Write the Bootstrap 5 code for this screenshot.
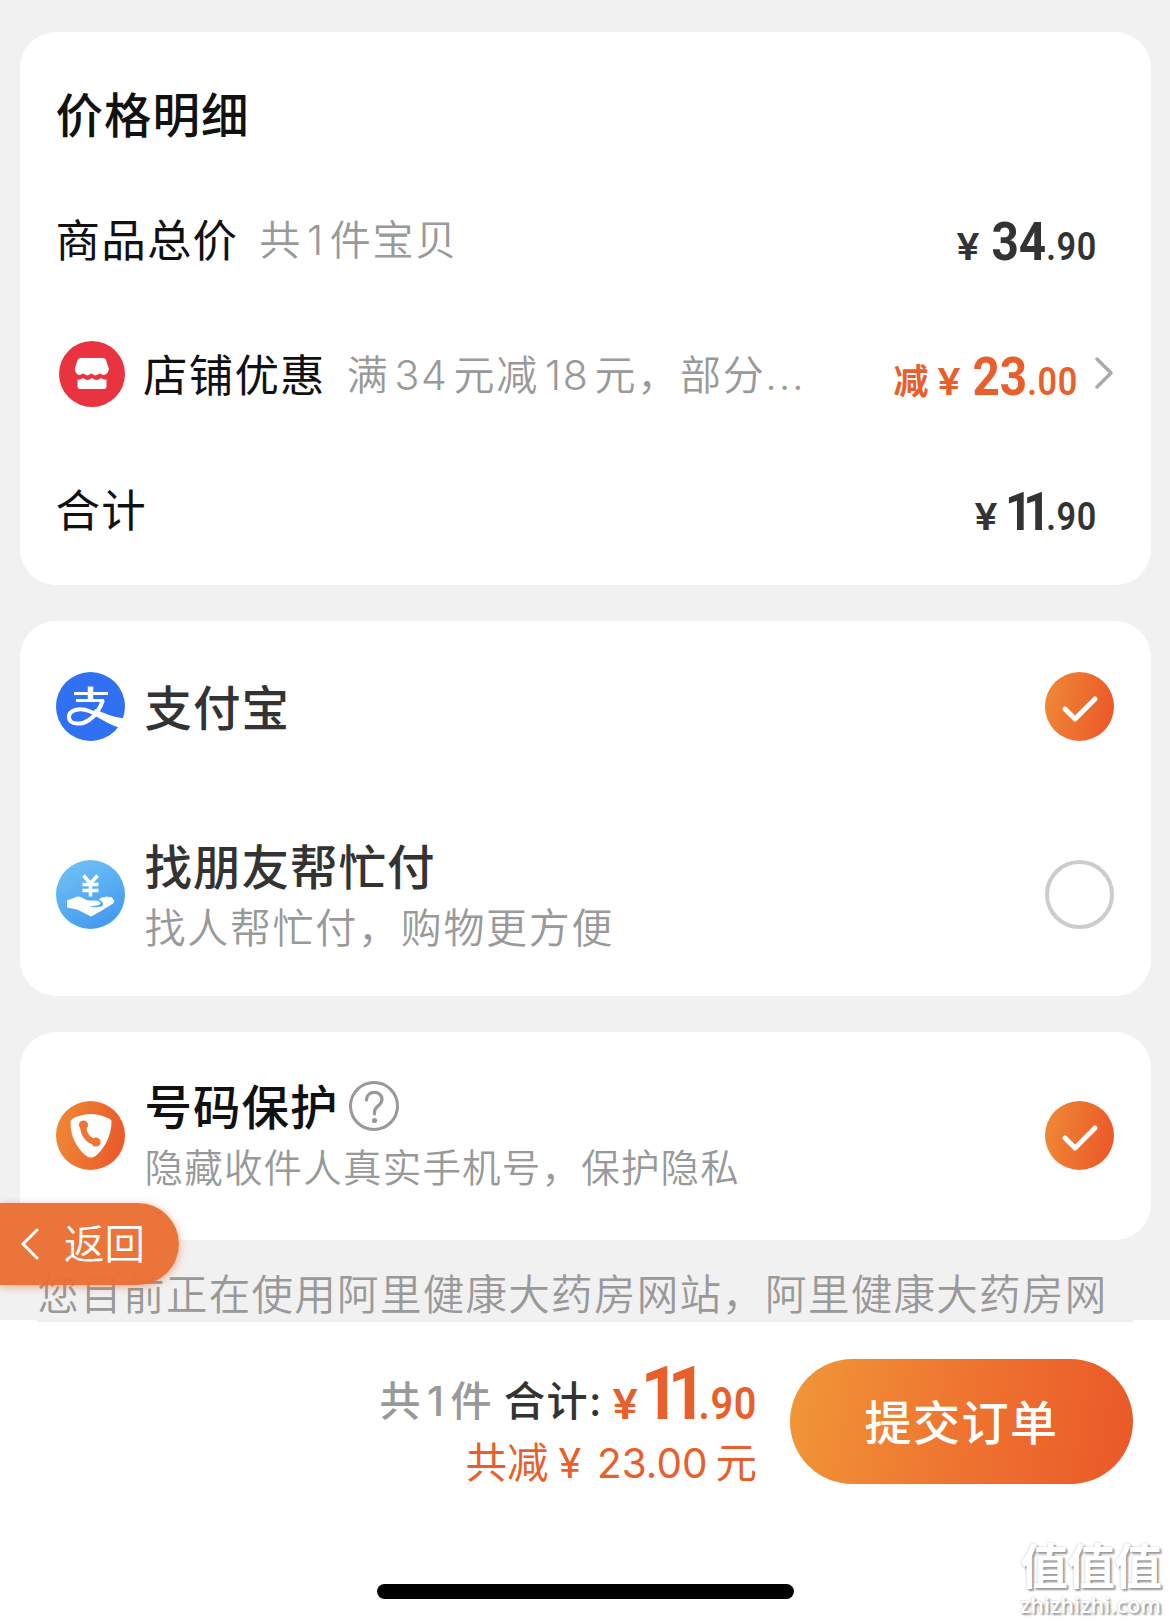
<!DOCTYPE html>
<html lang="zh-CN">
<head>
  <meta charset="UTF-8">
  <meta name="viewport" content="width=device-width, initial-scale=1">
  <title>确认订单</title>
  <link href="https://cdn.jsdelivr.net/npm/bootstrap@5.3.3/dist/css/bootstrap.min.css" rel="stylesheet">
  <style>
    body {
      background-color: #f1f1f1;
      color: #111;
      font-family: Inter, "Noto Sans CJK SC", sans-serif;
      height: 1623px;
      overflow: hidden;
      white-space: nowrap;
    }

    .page {
      padding: 32px 19.5px 0;
    }

    .card {
      border: 0;
      border-radius: 36px;
      padding: 0 37px 0 36px;
      margin-bottom: 36px;
    }

    .card-price { height: 553px; }
    .card-pay { height: 375px; }
    .card-privacy { height: 208px; margin-bottom: 0; }

    .title {
      font-size: 47.5px;
      font-weight: 500;
      letter-spacing: 1px;
      line-height: 64px;
    }

    .card-price .title { margin-top: 52px; }
    .line { height: 135px; }
    .line-first { margin-top: 24px; }

    .label {
      font-size: 44.5px;
      letter-spacing: 1.2px;
      line-height: 60px;
      padding-top: 2px;
    }

    .desc {
      color: #999;
      font-size: 41px;
      font-weight: 350;
      letter-spacing: 1.7px;
      line-height: 56px;
    }

    .desc-sm {
      font-size: 38.5px;
      letter-spacing: 1.2px;
    }

    .num { margin: 0 5px; }

    .dark { color: #333; }
    .orange { color: #e95f2c; }

    /* prices: narrow bold digits */
    .price {
      display: inline-block;
      font-family: Roboto, "Noto Sans CJK SC", sans-serif;
      font-size: 38px;
      font-weight: 600;
      line-height: 60px;
      letter-spacing: 0.8px;
      padding-top: 9px;
      transform: scaleX(0.9);
      transform-origin: right;
    }

    .price b {
      font-size: 53px;
      letter-spacing: 0;
      font-weight: 700;
      margin-left: 12px;
    }

    .price .yen {
      display: inline-block;
      font-family: Inter, sans-serif;
      font-size: 37px;
      transform: scaleX(1.25);
      transform-origin: right;
    }

    .price .ones { letter-spacing: -10px; margin-right: 5px; margin-left: 7px; }
    .price-pad { margin-right: 16px; }

    .cut {
      font-size: 35px;
      font-weight: 600;
      line-height: 60px;
      padding-top: 12px;
      margin-right: -1px;
    }

    .ico { width: 69px; height: 69px; flex: none; }
    .ico-shop { width: 66px; height: 66px; margin: 0 0 2px 3.5px; }

    .radio-off {
      width: 69px;
      height: 69px;
      border: 4px solid #ccc;
      border-radius: 50%;
    }

    .notice {
      color: #999;
      font-size: 41.5px;
      font-weight: 350;
      letter-spacing: 1.3px;
      line-height: 60px;
      padding: 25px 0 0 18px;
    }

    .back {
      position: absolute;
      left: 0;
      top: 1203px;
      width: 179px;
      height: 82px;
      padding: 0 0 1px 20px;
      border-radius: 0 41px 41px 0;
      background-color: rgba(234, 111, 52, 0.97);
      box-shadow: 0 2px 8px rgba(236, 95, 42, 0.5);
      color: #fff;
      font-size: 40.5px;
      font-weight: 350;
    }

    .footer-bar {
      height: 303px;
      background-color: #fff;
      padding: 0 37px;
    }

    .footer-bar .rule { height: 2px; background-color: #ededed; }

    .sum {
      height: 66px;
      font-size: 41px;
      font-weight: 500;
      letter-spacing: 1.5px;
      line-height: 66px;
    }

    .sum-text { padding-top: 11px; }
    .sum .price { font-size: 44px; line-height: 66px; padding-top: 0; margin-top: 3px; }
    .sum .price .yen { font-size: 41px; margin-left: 8px; }
    .sum .price b { font-size: 75px; line-height: 66px; }
    .sum .price .ones { letter-spacing: -13px; margin-left: 2px; margin-right: 4px; }

    .saved {
      font-size: 41.5px;
      font-weight: 400;
      line-height: 56px;
      margin-top: 12px;
    }

    .btn-submit {
      width: 343px;
      height: 125px;
      margin-left: 33px;
      padding-top: 10px;
      border: 0;
      background-image: linear-gradient(100deg, #f19737, #ee7430 50%, #ea5828);
      color: #fff;
      font-size: 47px;
      font-weight: 500;
      letter-spacing: 1.5px;
    }

    .home-bar {
      width: 417px;
      height: 15px;
      margin: 100px 0 0 340px;
      background-color: #000;
    }

    .watermark {
      position: absolute;
      right: 9px;
      bottom: 4px;
      color: #fff;
      text-align: right;
      text-shadow: 2px 2px 2px #999, 0 0 2px #bbb;
    }

    .watermark .zh { font-size: 48px; font-weight: 700; line-height: 48px; letter-spacing: -1px; }
    .watermark .en { font-family: "Open Sans", sans-serif; font-size: 21.7px; font-weight: 600; line-height: 28px; }
  </style>
</head>
<body class="position-relative">

<main class="page">

  <!-- Price details -->
  <section class="card card-price">
    <h2 class="title mb-0">价格明细</h2>
    <div class="line line-first d-flex align-items-center">
      <span class="label">商品总价</span>
      <span class="desc" style="margin-left: 21px">共<span class="num">1</span>件宝贝</span>
      <span class="price price-pad dark ms-auto"><span class="yen">¥</span><b>34</b>.90</span>
    </div>
    <div class="line d-flex align-items-center">
      <svg class="ico ico-shop" viewBox="0 0 66 66">
        <circle cx="33" cy="33" r="33" fill="#e93340"/>
        <path fill="#fff" d="M21 17h25c1.500 0 2.500 1 3 2.500l3 9c0 4-3 7-5.500 7-2 0-3-1-4.500-1.500-1.500 .5-2.500 2-4.500 2s-3-1.500-4.500-2c-1.500 .5-2.500 2-4.500 2s-3-1.500-4.500-2c-1.500 .5-2.500 1.500-4 1.500-2.500 0-5-3-5-7l3-9c.5-1.500 1.500-2.500 3.500-2.500z" transform="translate(2 1.300) scale(.92)"/>
        <path fill="#fff" d="M18.500 38.500c2.500 .5 4-.5 5.500-1.500 2.500 2.500 6 2.500 9 0 3 2.500 6.500 2.500 9 0 1.500 1 3 2 5.500 1.500v7c0 1.500-1 2.500-2.500 2.500h-24c-1.500 0-2.500-1-2.500-2.500z"/>
      </svg>
      <span class="label" style="margin-left: 18px">店铺优惠</span>
      <span class="desc" style="margin-left: 21px">满<span class="num">34</span>元减<span class="num" style="margin-left: 6px">18</span>元，部分...</span>
      <span class="cut orange ms-auto">减</span>
      <span class="price orange"><span class="yen">¥</span><b>23</b>.00</span>
      <svg width="20" height="32" style="margin: 0 0 3px 15px" viewBox="0 0 20 32" fill="none" stroke="#aaa" stroke-width="3.500" stroke-linecap="round" stroke-linejoin="round">
        <path d="M3 2l14 14L3 30"/>
      </svg>
    </div>
    <div class="line d-flex align-items-center">
      <span class="label">合计</span>
      <span class="price price-pad dark ms-auto"><span class="yen">¥</span><b class="ones">11</b>.90</span>
    </div>
  </section>

  <!-- Payment methods -->
  <section class="card card-pay">
    <div class="d-flex align-items-center" style="height: 172px">
      <svg class="ico" viewBox="0 0 69 69">
        <circle cx="34.500" cy="34.500" r="34.500" fill="#3070f2"/>
        <g fill="none" stroke="#fff">
          <path stroke-width="5.500" d="M34.500 14.500v14"/>
          <path stroke-width="3" d="M18 21.500h34M20 28.500h28"/>
          <path stroke-width="4" d="M47 28c-3 9-8 16-14 20-7 5-19 5-20-2-1-8 11-11 20-7 4 1.500 8 3.500 12 5.500"/>
        </g>
        <path fill="#fff" d="M39 37c8 4 18 8 29 9.500-.8 3-2 6.500-4 9.500C55 53 46 48 36 42z"/>
      </svg>
      <span class="title dark" style="margin-left: 20px; margin-top: 4px">支付宝</span>
      <svg class="ico ms-auto" viewBox="0 0 69 69">
        <defs>
          <linearGradient id="orangeFill" x1="0" y1="0.400" x2="1" y2="0.600">
            <stop offset="0" stop-color="#ef8735"/>
            <stop offset="1" stop-color="#eb5829"/>
          </linearGradient>
        </defs>
        <circle cx="34.500" cy="34.500" r="34.500" fill="url(#orangeFill)"/>
        <path d="M20 37l10 10 20-20" fill="none" stroke="#fff" stroke-width="5" stroke-linecap="round" stroke-linejoin="round"/>
      </svg>
    </div>
    <div class="d-flex align-items-center" style="height: 204px">
      <svg class="ico" viewBox="0 0 69 69">
        <defs>
          <linearGradient id="skyFill" x1="0" y1="0" x2="0.500" y2="1">
            <stop offset="0" stop-color="#72c5f5"/>
            <stop offset="1" stop-color="#479cf0"/>
          </linearGradient>
        </defs>
        <circle cx="34.500" cy="34.500" r="34.500" fill="url(#skyFill)"/>
        <path d="M27.500 15.500l7 8 7-8M26.500 24.500h16M26.500 30.500h16M34.500 23v13.500" fill="none" stroke="#fff" stroke-width="3.500"/>
        <path fill="#fff" d="M11 40c4 0 7-3 11-3.500 4 0 6 3 10 4h7c3 0 5 1 5.500 3-1 2-6 2.500-11.500 2.500 6 2 12 1.500 14-1 .5-2-1-4-4-5 1-2 3-3 5-2.500 1.500-1.500 4-1.500 5 0 2-1 4 0 4 2 2 .5 1.500 2.500 0 4L45 51l-10 5.500-14-7-10-2z"/>
      </svg>
      <div style="margin-left: 20px; padding-top: 3px">
        <div class="title dark">找朋友帮忙付</div>
        <div class="desc">找人帮忙付，购物更方便</div>
      </div>
      <span class="radio-off ms-auto"></span>
    </div>
  </section>

  <!-- Number protection -->
  <section class="card card-privacy">
    <div class="d-flex align-items-center" style="height: 206px">
      <svg class="ico" viewBox="0 0 69 69">
        <circle cx="34.500" cy="34.500" r="34.500" fill="url(#orangeFill)"/>
        <path fill="#fff" d="M35 13c5 0 9 1 13 2.500 5 1.500 7.500 3 7.500 5 0 8-2 15-6 22.500-4 6-9 13.500-14.500 13.500S24 49 20 43c-4-7-5.500-14-5.500-21.500 0-3 2.500-4.500 7-6C26 14 30 13 35 13z"/>
        <path d="M27.500 24c-1 9 5 16 13 17.500" fill="none" stroke="#ed7435" stroke-width="6" stroke-linecap="round"/>
        <circle cx="27.500" cy="24" r="4.600" fill="#ed7435"/>
        <circle cx="40" cy="41" r="4.600" fill="#ed7435"/>
      </svg>
      <div style="margin-left: 20px; padding-top: 1px">
        <div class="d-flex align-items-center">
          <span class="title">号码保护</span>
          <svg style="margin: 0 0 4px 10px" width="50" height="50" viewBox="0 0 50 50" fill="none" stroke="#999">
            <circle cx="25" cy="25" r="23.500" stroke-width="3"/>
            <path d="M17.500 19c0-10 15.500-10 15.500-.5 0 6-7.500 6.500-7.500 12.500v2" stroke-width="3.200" stroke-linecap="round"/>
            <circle cx="25.500" cy="39.500" r="2.600" fill="#999" stroke="none"/>
          </svg>
        </div>
        <div class="desc desc-sm">隐藏收件人真实手机号，保护隐私</div>
      </div>
      <svg class="ico ms-auto" viewBox="0 0 69 69">
        <circle cx="34.500" cy="34.500" r="34.500" fill="url(#orangeFill)"/>
        <path d="M20 37l10 10 20-20" fill="none" stroke="#fff" stroke-width="5" stroke-linecap="round" stroke-linejoin="round"/>
      </svg>
    </div>
  </section>

  <div class="notice">您目前正在使用阿里健康大药房网站，阿里健康大药房网</div>
</main>

<!-- Floating back button -->
<a class="back d-flex align-items-center text-decoration-none" href="#">
  <svg width="20" height="32" viewBox="0 0 20 32" fill="none" stroke="#fff" stroke-width="3" stroke-linecap="round" stroke-linejoin="round">
    <path d="M17 2L3 16l14 14"/>
  </svg>
  <span style="margin-left: 24px; padding-top: 3px">返回</span>
</a>

<!-- Submit bar -->
<footer class="footer-bar fixed-bottom">
  <div class="rule"></div>
  <div class="d-flex justify-content-end" style="height: 162px; padding-top: 37px">
    <div class="text-end" style="margin-top: -2px">
      <div class="sum d-flex justify-content-end">
        <span class="sum-text" style="color: #999">共<span class="num">1</span>件</span>
        <span class="sum-text dark" style="margin: 0 -9px 0 11px">合计:</span>
        <span class="price orange"><span class="yen">¥</span><b class="ones">11</b>.90</span>
      </div>
      <div class="saved orange">共减<span style="margin: 0 4px 0 10px">¥</span> <span style="font-size: 40.5px">23.00</span><span style="margin-left: 8px">元</span></div>
    </div>
    <button type="button" class="btn btn-submit rounded-pill">提交订单</button>
  </div>
  <div class="home-bar rounded-pill"></div>
  <div class="watermark">
    <div class="zh">值值值</div>
    <div class="en">zhizhizhi.com</div>
  </div>
</footer>

<script src="https://cdn.jsdelivr.net/npm/bootstrap@5.3.3/dist/js/bootstrap.bundle.min.js"></script>
</body>
</html>
